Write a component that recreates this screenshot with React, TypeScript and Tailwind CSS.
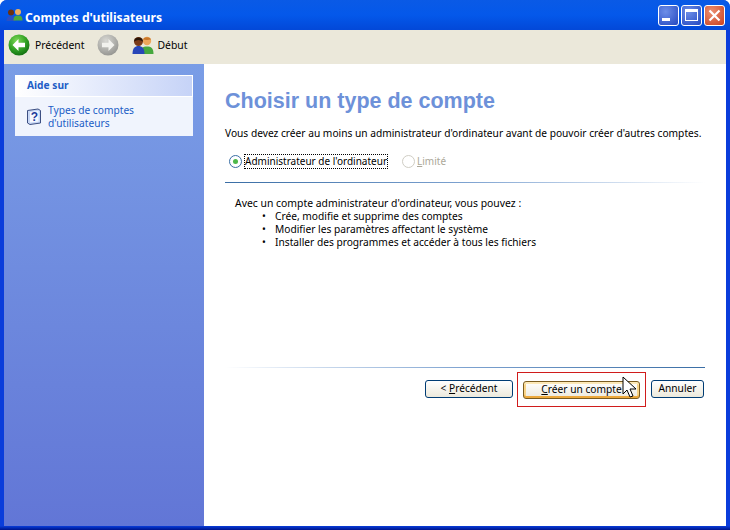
const Logo = () => (
  <svg width="17" height="15" viewBox="0 0 17 15" className="shrink-0">
    <circle cx="5" cy="4.500" r="3" fill="#6b3212" />
    <path d="M0.500 13c0-4 1.500-5 4.500-5s4.500 1 4.500 5z" fill="#2b4fc4" />
    <circle cx="12" cy="4" r="3" fill="#f0b060" />
    <path d="M7.500 12.500c0-4 1.500-5 4.500-5s4.500 1 4.500 5z" fill="#4da83c" />
  </svg>
);

const Arrow = ({ active }: { active: boolean }) => (
  <svg width="22" height="22" viewBox="0 0 22 22" className="shrink-0">
    <defs>
      <radialGradient id="greenBall" cx="40%" cy="30%" r="75%">
        <stop offset="0%" stopColor="#7ed957" />
        <stop offset="60%" stopColor="#2e9e22" />
        <stop offset="100%" stopColor="#0f6a10" />
      </radialGradient>
      <radialGradient id="greyBall" cx="40%" cy="30%" r="75%">
        <stop offset="0%" stopColor="#d8d8d4" />
        <stop offset="100%" stopColor="#93938f" />
      </radialGradient>
    </defs>
    <circle cx="11" cy="11" r="10.500" fill={active ? "url(#greenBall)" : "url(#greyBall)"} />
    {active ? (
      <path d="M4.500 11l6-6v3.700h6.500v4.600h-6.500v3.700z" fill="#fff" />
    ) : (
      <path d="M17.500 11l-6-6v3.700h-6.500v4.600h6.500v3.700z" fill="#f2f2ee" />
    )}
  </svg>
);

const People = () => (
  <svg width="22" height="20" viewBox="0 0 22 20" className="shrink-0">
    <circle cx="15" cy="6" r="4.200" fill="#eda65a" />
    <path d="M11 4.500c1-3 7-3 8 0-2 .5-6 .5-8 0z" fill="#c9772a" />
    <path d="M8 19c0-6 3-7.500 7-7.500s6.500 1.500 6.500 7.500z" fill="#46a83e" />
    <circle cx="6.500" cy="6.500" r="4.500" fill="#7a3a18" />
    <path d="M2 6.500C2 1 11 1 11 6.500 8 4.500 5 4.500 2 6.500z" fill="#2a1408" />
    <path d="M0.500 19c0-6 2.500-8 6-8s6 2 6 8z" fill="#2846b8" />
  </svg>
);

const HelpIcon = () => (
  <svg width="16" height="17" viewBox="0 0 16 17" className="shrink-0">
    <path d="M1.500 2.500L12 1l2.500 1.500v12.500L4 16.500 1.500 15z" fill="#c9d8f6" stroke="#3c4f82" />
    <path d="M4 4l8.500-1v10.500L4 14.500z" fill="#f6f9ff" />
    <text x="4.800" y="13" fontSize="12" fontWeight="700" fill="#1c3a9c" fontFamily="'Liberation Sans', sans-serif">?</text>
  </svg>
);

const WinButton = ({ kind }: { kind: "min" | "max" | "close" }) => (
  <div
    className={`w-[21px] h-[21px] rounded-[3px] border border-white flex items-center justify-center ${
      kind === "close"
        ? "bg-[radial-gradient(circle_at_35%_30%,#ec8f70,#c9401f)]"
        : "bg-[radial-gradient(circle_at_35%_30%,#6d8ee8,#2448c0)]"
    }`}
  >
    {kind === "min" && <div className="w-[8px] h-[3px] bg-white mt-[9px] mr-[5px]" />}
    {kind === "max" && <div className="w-[13px] h-[12px] border border-white border-t-[3px]" />}
    {kind === "close" && (
      <svg width="13" height="13" viewBox="0 0 13 13">
        <path d="M1.500 1.500l10 10M11.500 1.500l-10 10" stroke="#fff" strokeWidth="2.200" />
      </svg>
    )}
  </div>
);

const XpButton = ({ className, children }: { className: string; children: React.ReactNode }) => (
  <div
    className={`h-[18px] pb-[1px] rounded-[3px] border border-[#003c74] bg-gradient-to-b from-white to-[#ece9dc] flex items-center justify-center text-black ${className}`}
  >
    {children}
  </div>
);

export default function App() {
  return (
    <div className="w-[730px] h-[530px] flex flex-col overflow-hidden rounded-t-[7px] bg-[#0a3ddb] font-['Noto_Sans',sans-serif] text-[10.2px] leading-[13px] text-black relative">
      {/* Title bar */}
      <div className="h-[30px] shrink-0 flex items-center pl-[6px] pr-[5px] bg-gradient-to-b from-[#0a5ae6] via-[#0458ea] to-[#0348d8]">
        <Logo />
        <span className="ml-[2px] mt-[4px] text-white font-bold text-[12.2px]">Comptes d'utilisateurs</span>
        <div className="ml-auto flex gap-[2px]">
          <WinButton kind="min" />
          <WinButton kind="max" />
          <WinButton kind="close" />
        </div>
      </div>

      {/* Window body */}
      <div className="flex-1 mx-[4px] flex flex-col min-h-0">
        <div className="h-[34px] shrink-0 bg-[#ebe8da] flex items-center pl-[4px] pb-[4px] text-[10.4px]">
          <Arrow active />
          <span className="ml-[5px]">Précédent</span>
          <div className="ml-[12px]">
            <Arrow active={false} />
          </div>
          <div className="ml-[13px]">
            <People />
          </div>
          <span className="ml-[4px]">Début</span>
        </div>

        <div className="flex-1 flex min-h-0">
          {/* Sidebar */}
          <div className="w-[200px] shrink-0 bg-gradient-to-b from-[#7a9de6] to-[#6276d6] px-[11px] pt-[11px]">
            <div className="h-[22px] border border-white bg-gradient-to-r from-white to-[#c6d3f7] pl-[11px] pb-[1px] flex items-center font-bold text-[#215dc6]">
              Aide sur
            </div>
            <div className="h-[39px] bg-[#f0f4fd] flex items-start pl-[11px] pt-[7px]">
              <div className="mt-[4px]">
                <HelpIcon />
              </div>
              <div className="ml-[6px] text-[#215dc6]">
                Types de comptes
                <br />
                d'utilisateurs
              </div>
            </div>
          </div>

          {/* Main */}
          <div className="flex-1 min-w-0 bg-white flex flex-col pl-[21px] pr-[21px]">
            <h1 className="mt-[24px] h-[26px] font-['Liberation_Sans',sans-serif] font-bold text-[21.5px] leading-[26px] text-[#6d91d9]">
              Choisir un type de compte
            </h1>
            <p className="mt-[13px] whitespace-nowrap">
              Vous devez créer au moins un administrateur d'ordinateur avant de pouvoir créer d'autres comptes.
            </p>
            <div className="mt-[14px] flex items-center pl-[4px] h-[15px] text-[10px]">
              <span className="w-[13px] h-[13px] rounded-full border border-[#3a6ea5] bg-white flex items-center justify-center">
                <span className="w-[5px] h-[5px] rounded-full bg-[#4db84a]" />
              </span>
              <span className="ml-[3px] outline-dotted outline-1 outline-black">Administrateur de l'ordinateur</span>
              <span className="ml-[15px] w-[13px] h-[13px] rounded-full border border-[#cfcdc4]" />
              <span className="ml-[2px] text-[#aca899]">
                <span className="underline">L</span>imité
              </span>
            </div>
            <div className="mt-[13px] h-px bg-gradient-to-r from-[#3a6ea5] via-[#7da2d0] to-white" />
            <div className="mt-[14px] pl-[10px]">
              <p className="text-[10.4px]">Avec un compte administrateur d'ordinateur, vous pouvez :</p>
              <ul className="pl-[27px]">
                {[
                  "Crée, modifie et supprime des comptes",
                  "Modifier les paramètres affectant le système",
                  "Installer des programmes et accéder à tous les fichiers",
                ].map((item) => (
                  <li key={item} className="flex">
                    <span className="w-[13px]">•</span>
                    {item}
                  </li>
                ))}
              </ul>
            </div>

            <div className="mt-[118px] h-px bg-gradient-to-l from-[#3a6ea5] via-[#7da2d0] to-white" />
            <div className="mt-[12px] flex justify-end pr-[1px]">
              <XpButton className="w-[88px]">
                <span>
                  &lt; <span className="underline">P</span>récédent
                </span>
              </XpButton>
              <XpButton className="w-[117px] ml-[10px] mt-[1px] border-[#7a5c20] shadow-[inset_0_2px_0_#fde9b8,inset_0_-2px_0_#eda93c,inset_2px_0_0_#f8d488,inset_-2px_0_0_#f8d488]">
                <span>
                  <span className="underline">C</span>réer un compte
                </span>
              </XpButton>
              <XpButton className="w-[53px] ml-[11px]">Annuler</XpButton>
            </div>
          </div>
        </div>
      </div>

      {/* Bottom frame */}
      <div className="h-[4px] shrink-0 bg-gradient-to-b from-[#0a3ddb] to-[#00138c]" />

      {/* Red annotation and cursor over the primary button */}
      <div className="absolute left-[517px] top-[372px] w-[129px] h-[35px] border border-[#d01c1c]" />
      <svg width="16" height="24" viewBox="0 0 16 24" className="absolute left-[622px] top-[376px]">
        <path d="M1 1v17l4-4 3 7 3-1-3-7h6z" fill="#fff" stroke="#000" />
      </svg>
    </div>
  );
}
